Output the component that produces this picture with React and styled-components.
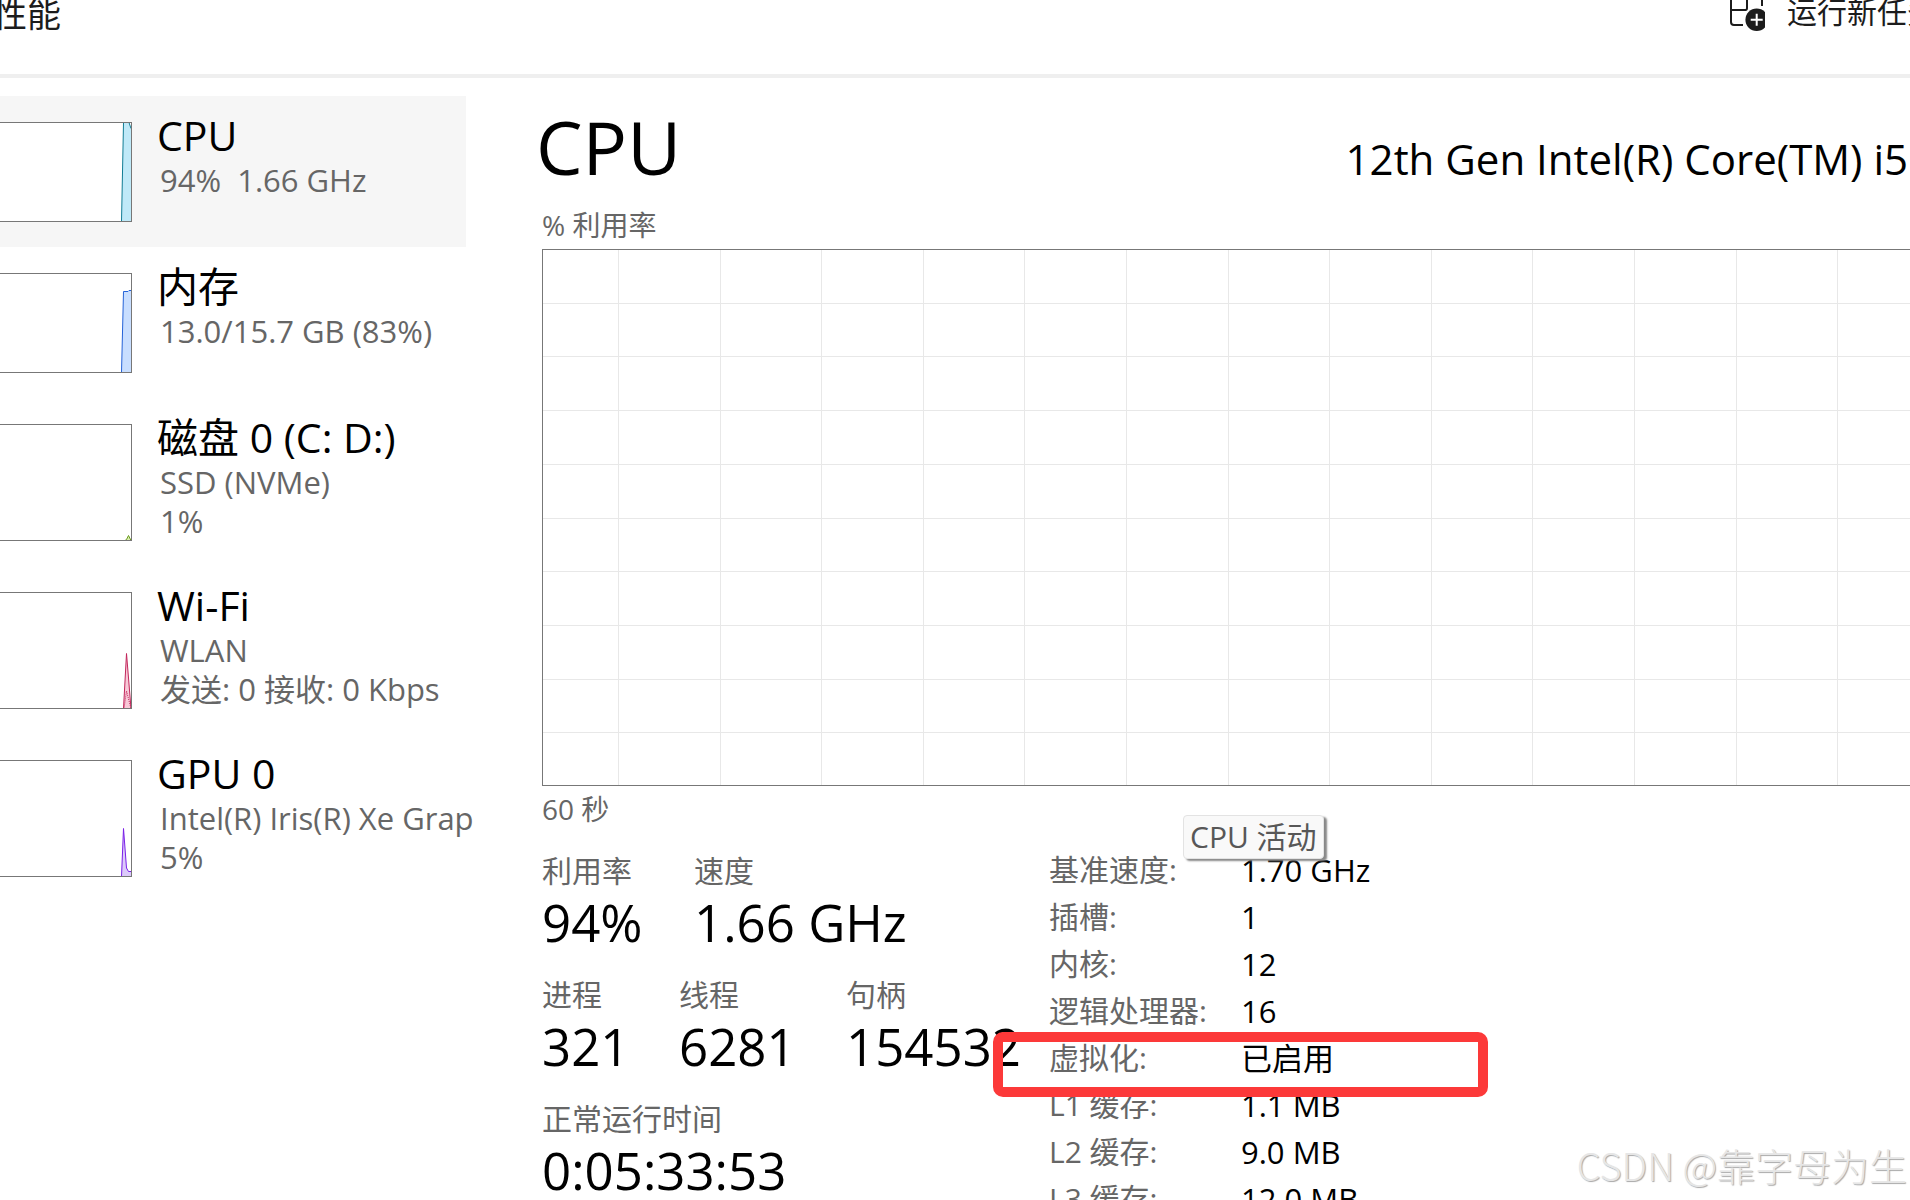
import React from 'react'
import styled, { createGlobalStyle } from 'styled-components'

const devices = [
  {
    name: 'CPU',
    lines: ['94%\u00a0 1.66 GHz'],
    height: 100,
    stroke: '#117d95',
    fill: '#bfe9f8',
    points: '121.5,99.5 123.5,0.5 129,0.5 131,6.5',
    active: true,
  },
  {
    name: '内存',
    lines: ['13.0/15.7 GB (83%)'],
    height: 100,
    stroke: '#2563d8',
    fill: '#c8deff',
    points: '121.5,99.5 123.5,18.5 128,18.5 129,17.5 131,17.5',
  },
  {
    name: '磁盘 0 (C: D:)',
    lines: ['SSD (NVMe)', '1%'],
    height: 117,
    stroke: '#6b9a1f',
    fill: '#d9ecae',
    points: '125,116.5 126.5,115.5 128.5,111.5 131,116.5',
  },
  {
    name: 'Wi-Fi',
    lines: ['WLAN', '发送: 0 接收: 0 Kbps'],
    height: 117,
    stroke: '#c2265b',
    fill: '#f8c9d8',
    points: '123.5,116.5 126.5,61.5 131,116.5',
    dashed: '124,116.5 126.5,99 131,116.5',
  },
  {
    name: 'GPU 0',
    lines: ['Intel(R) Iris(R) Xe Graphics', '5%'],
    height: 117,
    stroke: '#7a1fe8',
    fill: '#dccafa',
    points: '121.5,116.5 123.5,68.5 126.5,108 128.5,111.5 131,111.5',
  },
]

const stats = [
  [
    { label: '利用率', value: '94%', width: 152 },
    { label: '速度', value: '1.66 GHz' },
  ],
  [
    { label: '进程', value: '321', width: 137 },
    { label: '线程', value: '6281', width: 167 },
    { label: '句柄', value: '154532' },
  ],
  [{ label: '正常运行时间', value: '0:05:33:53' }],
]

const details = [
  ['基准速度:', '1.70 GHz'],
  ['插槽:', '1'],
  ['内核:', '12'],
  ['逻辑处理器:', '16'],
  ['虚拟化:', '已启用'],
  ['L1 缓存:', '1.1 MB'],
  ['L2 缓存:', '9.0 MB'],
  ['L3 缓存:', '12.0 MB'],
]

const columns = Array.from({ length: 24 }, (_, i) => Math.round(76 + i * 101.6))
const rows = Array.from({ length: 9 }, (_, i) => Math.round((i + 1) * 53.7))

const MiniChart = ({ device }) => {
  const { height, points, stroke, fill, dashed } = device
  return (
    <MiniSvg width="132" height={height} aria-hidden="true">
      <rect x="-2" y="0.5" width="133.5" height={height - 1} fill="#fff" />
      <polygon points={`${points} 131,${height}`} fill={fill} />
      <polyline points={points} fill="none" stroke={stroke} />
      {dashed && <polyline points={dashed} fill="none" stroke={stroke} strokeDasharray="1 1" />}
      <rect x="-2" y="0.5" width="133.5" height={height - 1} fill="none" stroke="#777" />
    </MiniSvg>
  )
}

const NewTaskIcon = () => (
  <svg width="36" height="32" viewBox="0 0 36 32" fill="none" aria-hidden="true">
    <path d="M2 0V22Q2 25 5 25H14M2 10H16.5Q18 10 18 8V0M33 0V6" stroke="#1c1c1c" strokeWidth="2" />
    <circle cx="27.7" cy="19.7" r="11.3" fill="#1c1c1c" />
    <path d="M27.7 13.7V25.7M21.7 19.7H33.7" stroke="#fff" strokeWidth="2" />
  </svg>
)

const App = () => {
  return (
    <>
      <GlobalStyle />
      <Page>
        <Header>
          <h1>性能</h1>
          <NewTask type="button">
            <NewTaskIcon />
            运行新任务
          </NewTask>
        </Header>
        <Body>
          <Sidebar>
            {devices.map((device) => (
              <Device key={device.name} type="button" $active={device.active}>
                <MiniChart device={device} />
                <DeviceText>
                  <DeviceName>{device.name}</DeviceName>
                  {device.lines.map((line) => (
                    <DeviceLine key={line}>{line}</DeviceLine>
                  ))}
                </DeviceText>
              </Device>
            ))}
          </Sidebar>
          <Main>
            <TitleRow>
              <h2>CPU</h2>
              <p>12th Gen Intel(R) Core(TM) i5</p>
            </TitleRow>
            <Caption>% 利用率</Caption>
            <Chart role="img" aria-label="% 利用率">
              {columns.map((x) => (
                <rect key={x} x={x - 1} y="0" width="1" height="100%" />
              ))}
              {rows.map((y) => (
                <rect key={y} x="0" y={y - 1} width="100%" height="1" />
              ))}
            </Chart>
            <Caption>60 秒</Caption>
            <Info>
              <Stats>
                {stats.map((row) => (
                  <StatRow key={row[0].label}>
                    {row.map((stat) => (
                      <Stat key={stat.label} $width={stat.width}>
                        <dt>{stat.label}</dt>
                        <dd>{stat.value}</dd>
                      </Stat>
                    ))}
                  </StatRow>
                ))}
              </Stats>
              <Details>
                <table>
                  <tbody>
                    {details.map(([label, value]) => (
                      <tr key={label}>
                        <th scope="row">{label}</th>
                        <td>{value}</td>
                      </tr>
                    ))}
                  </tbody>
                </table>
                <Highlight />
                <Tooltip role="tooltip">CPU 活动</Tooltip>
              </Details>
            </Info>
          </Main>
        </Body>
        <Watermark>CSDN @靠字母为生</Watermark>
      </Page>
    </>
  )
}

export default App

const GlobalStyle = createGlobalStyle`
*{
  box-sizing: border-box;
  margin: 0;
  padding: 0;
}
body{
  background: #fff;
  color: #000;
  font-family: "Open Sans", "Noto Sans CJK SC", sans-serif;
}
button{
  border: 0;
  background: none;
  color: inherit;
  font-family: inherit;
  text-align: left;
}
h1, h2, th{
  font-weight: 400;
}
`

const Page = styled.div`
position: relative;
height: 100vh;
overflow: hidden;
`

const Header = styled.header`
display: flex;
align-items: flex-start;
justify-content: space-between;
height: 78px;
overflow: hidden;
border-bottom: 4px solid #efefef;
color: #1c1c1c;
white-space: nowrap;
h1{
  margin-left: -7px;
  font-size: 34px;
  line-height: 28px;
}
`

const NewTask = styled.button`
display: flex;
gap: 22px;
margin-right: -27px;
font-size: 30px;
line-height: 24px;
`

const Body = styled.div`
display: flex;
`

const Sidebar = styled.nav`
flex: none;
width: 466px;
padding-top: 18px;
`

const Device = styled.button`
display: flex;
align-items: flex-start;
gap: 25px;
width: 100%;
padding: 26px 0 25px;
background: ${({ $active }) => ($active ? '#f6f6f6' : 'transparent')};
`

const MiniSvg = styled.svg`
flex: none;
`

const DeviceText = styled.span`
flex: none;
display: block;
width: 317px;
margin: -12px 0;
overflow: hidden;
white-space: nowrap;
`

const DeviceName = styled.span`
display: block;
font-size: 41px;
line-height: 51px;
`

const DeviceLine = styled.span`
display: block;
padding-left: 3px;
color: #666;
font-size: 31px;
line-height: 39px;
`

const Main = styled.main`
flex: 1;
min-width: 0;
padding: 18px 0 0 76px;
`

const TitleRow = styled.div`
display: flex;
align-items: baseline;
justify-content: space-between;
height: 106px;
white-space: nowrap;
h2{
  margin-left: -6px;
  font-size: 74px;
  line-height: 102px;
}
p{
  padding-right: 2px;
  font-size: 42px;
}
`

const Caption = styled.p`
color: #666;
font-size: 28px;
line-height: 47px;
`

const Chart = styled.svg`
display: block;
width: 100%;
height: 537px;
border: 1px solid #777;
border-right: 0;
rect{
  fill: #e8e8e8;
}
`

const Info = styled.div`
display: flex;
margin-top: 15px;
`

const Stats = styled.div`
flex: none;
width: 507px;
`

const StatRow = styled.dl`
display: flex;
height: 124px;
white-space: nowrap;
`

const Stat = styled.div`
width: ${({ $width }) => ($width ? `${$width}px` : 'auto')};
dt{
  color: #666;
  font-size: 30px;
  line-height: 46px;
}
dd{
  font-size: 51px;
  line-height: 56px;
}
`

const Details = styled.div`
position: relative;
flex: none;
table{
  border-collapse: collapse;
}
th, td{
  height: 47px;
  line-height: 44px;
  text-align: left;
  vertical-align: top;
  white-space: nowrap;
}
th{
  width: 192px;
  color: #666;
  font-size: 30px;
}
td{
  font-size: 31px;
}
`

const Highlight = styled.div`
position: absolute;
top: 184px;
left: -56px;
width: 495px;
height: 65px;
border: 10px solid #fc3939;
border-radius: 10px;
`

const Tooltip = styled.div`
position: absolute;
top: -33px;
left: 134px;
height: 44px;
padding: 0 6px;
border: 1px solid #e3e3e3;
border-radius: 4px;
background: #f9f9f9;
box-shadow: 3px 2px 2px #888;
color: #575757;
font-size: 30px;
line-height: 42px;
white-space: nowrap;
`

const Watermark = styled.p`
position: absolute;
right: 3px;
bottom: 8px;
color: #e6e6e6;
font-family: "Noto Sans CJK SC", sans-serif;
font-size: 38px;
font-weight: 300;
text-shadow: 1px 1px 1px #a8a8a8;
`
